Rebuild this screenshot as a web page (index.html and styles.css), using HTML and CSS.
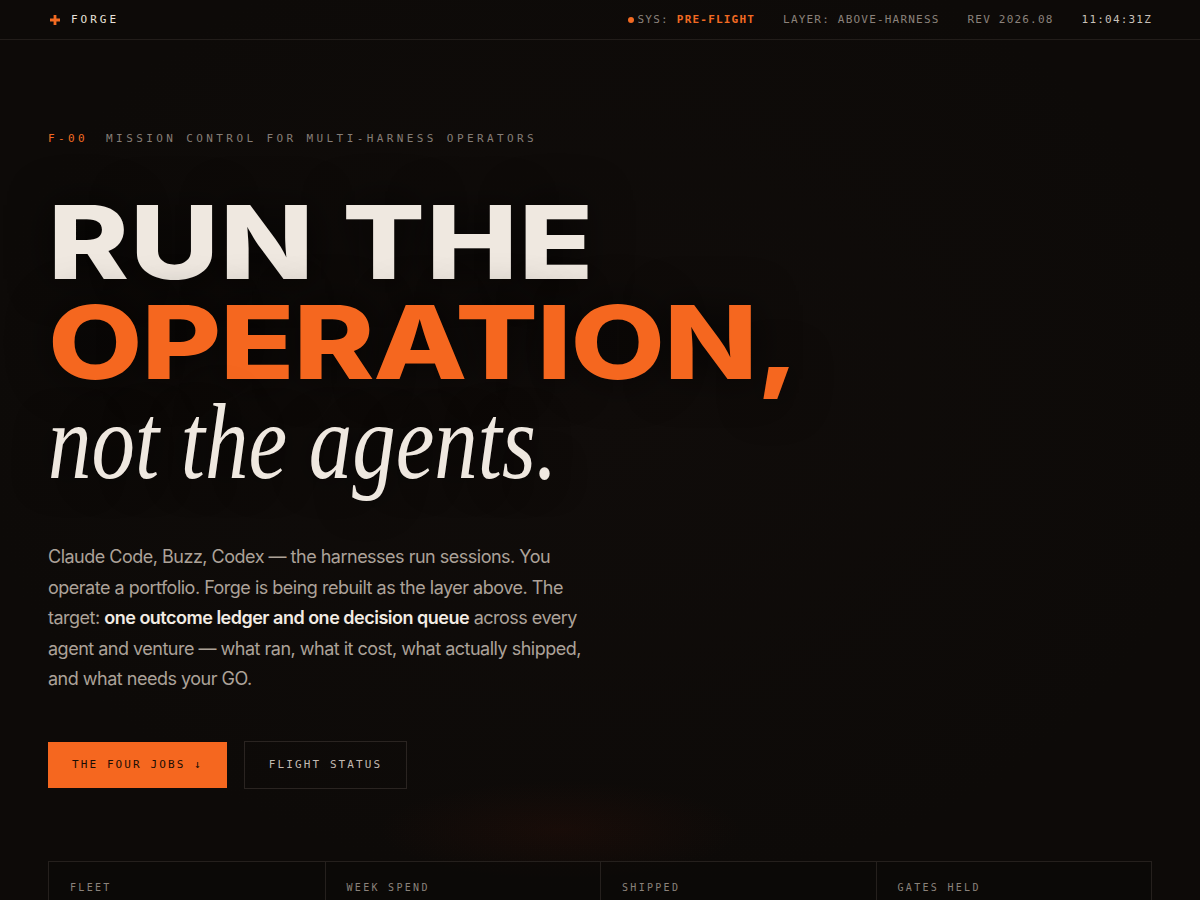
FILE: index.html
```html
<!DOCTYPE html>
<html lang="en">
<head>
<meta charset="utf-8">
<title>Forge — Mission control</title>
<link rel="stylesheet" href="styles.css">
</head>
<body>
<header class="topbar">
  <div class="brand">
    <svg class="brand-mark" width="10" height="10" viewBox="0 0 10 10" aria-hidden="true"><path d="M3.6 0h2.8v3.6H10v2.8H6.4V10H3.6V6.4H0V3.6h3.6z" fill="#f26a22"/></svg>
    <span class="brand-name">FORGE</span>
  </div>
  <nav class="status">
    <span class="status-item"><span class="dot"></span>SYS: <b class="hot">PRE-FLIGHT</b></span>
    <span class="status-item">LAYER: ABOVE-HARNESS</span>
    <span class="status-item">REV 2026.08</span>
    <span class="status-item clock">11:04:31Z</span>
  </nav>
</header>
<main class="hero">
  <p class="eyebrow"><span class="code">F-00</span><span>MISSION CONTROL FOR MULTI-HARNESS OPERATORS</span></p>
  <h1 class="headline">
    <span class="line"><span class="wide">RUN THE</span></span>
    <span class="line"><span class="wide accent">OPERATION,</span></span>
    <span class="line"><span class="serif">not the agents.</span></span>
  </h1>
  <p class="lede">Claude Code, Buzz, Codex — the harnesses run sessions. You operate a portfolio. Forge is being rebuilt as the layer above. The target: <strong>one outcome ledger and one decision queue</strong> across every agent and venture — what ran, what it cost, what actually shipped, and what needs your GO.</p>
  <div class="actions">
    <a class="btn btn-primary" href="#jobs">THE FOUR JOBS ↓</a>
    <a class="btn btn-ghost" href="#status">FLIGHT STATUS</a>
  </div>
  <section class="stats">
    <div class="stat"><span class="stat-label">FLEET</span></div>
    <div class="stat"><span class="stat-label">WEEK SPEND</span></div>
    <div class="stat"><span class="stat-label">SHIPPED</span></div>
    <div class="stat"><span class="stat-label">GATES HELD</span></div>
  </section>
</main>
</body>
</html>
```
FILE: styles.css
```css
* { box-sizing: border-box; }
html, body { margin: 0; padding: 0; }
body {
  width: 1200px;
  height: 900px;
  overflow: hidden;
  background:
    radial-gradient(ellipse 260px 70px at 560px 830px, rgba(120, 30, 10, 0.10), transparent 70%),
    radial-gradient(ellipse 900px 700px at 50% 45%, #100c0a 0%, #0d0a08 70%);
  background-color: #0d0a08;
  color: #efe8e0;
  font-family: Inter, "Liberation Sans", sans-serif;
}
.topbar {
  height: 40px;
  border-bottom: 1px solid #221d1a;
  display: flex;
  align-items: center;
  justify-content: space-between;
  padding: 0 48px 0 50px;
  font-family: "DejaVu Sans Mono", "Liberation Mono", monospace;
  font-size: 11px;
}
.brand { display: flex; align-items: center; gap: 11px; }
.brand-mark { display: block; }
.brand-name { color: #e9e3dc; letter-spacing: 3px; }
.status { display: flex; align-items: center; gap: 28px; }
.status-item { color: #8b827b; letter-spacing: 1.2px; display: flex; align-items: center; }
.dot { width: 6px; height: 6px; border-radius: 50%; background: #f26a22; margin-right: 4px; }
.hot { color: #f26a22; font-weight: bold; margin-left: 8px; }
.clock { color: #c9c1b9; }

.hero { padding: 91px 48px 0; }
.eyebrow {
  margin: 0;
  height: 16px;
  line-height: 16px;
  font-family: "DejaVu Sans Mono", "Liberation Mono", monospace;
  font-size: 11px;
  letter-spacing: 3.4px;
  color: #857d76;
  display: flex;
  gap: 18px;
}
.eyebrow .code { color: #f26a22; }
.headline {
  margin: 45px 0 0;
  font-weight: 800;
  text-shadow: 0 0 40px rgba(0, 0, 0, 0.7);
}
.line { display: block; height: 100px; line-height: 100px; white-space: nowrap; }
.wide {
  display: inline-block;
  font-family: Inter, "Liberation Sans", sans-serif;
  font-size: 102px;
  font-weight: 800;
  letter-spacing: 0.8px;
  transform: scaleX(1.2);
  transform-origin: 0 50%;
  color: #efe8e0;
}
.accent { color: #f5671f; letter-spacing: -1px; }
.serif {
  display: inline-block;
  font-family: "Liberation Serif", "DejaVu Serif", serif;
  font-style: italic;
  font-weight: 400;
  font-size: 108px;
  transform: scaleX(0.805);
  transform-origin: 0 50%;
  color: #efe8e0;
}
.lede {
  margin: 50px 0 0;
  width: 545px;
  font-size: 18px;
  line-height: 30.5px;
  color: #aca299;
  letter-spacing: -0.5px;
}
.lede strong { color: #f2ebe3; font-weight: 600; }
.actions { display: flex; align-items: center; gap: 17px; margin-top: 46px; }
.btn {
  display: flex;
  align-items: center;
  text-decoration: none;
  font-family: "DejaVu Sans Mono", "Liberation Mono", monospace;
  font-size: 11px;
  letter-spacing: 2.1px;
  padding: 0 24px;
}
.btn-primary { height: 46px; background: #f5671f; color: #1a0d05; }
.btn-ghost { height: 48px; border: 1px solid #2a2421; color: #c2b9b1; }
.stats {
  margin-top: 72px;
  display: grid;
  grid-template-columns: repeat(4, 1fr);
  border: 1px solid #25201d;
  border-bottom: none;
  height: 60px;
  background: rgba(10, 8, 6, 0.5);
}
.stat { border-left: 1px solid #25201d; padding: 20px 21px 0; }
.stat:first-child { border-left: none; }
.stat-label {
  display: block;
  line-height: 12px;
  font-family: "DejaVu Sans Mono", "Liberation Mono", monospace;
  font-size: 10px;
  letter-spacing: 2.3px;
  color: #8a827b;
}
```
